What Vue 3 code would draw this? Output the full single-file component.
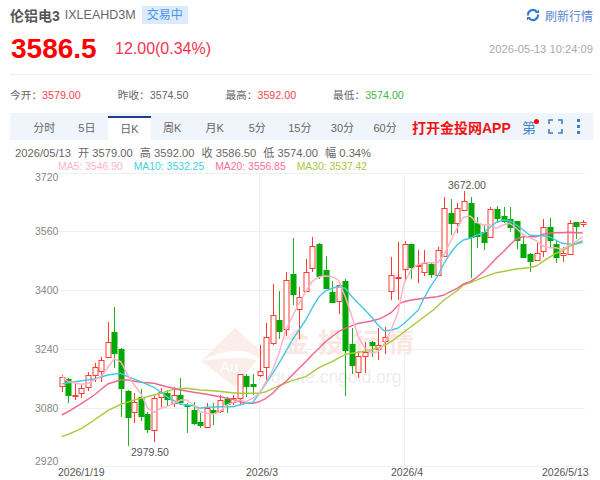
<script setup>
const tabs = ["分时", "5日", "日K", "周K", "月K", "5分", "15分", "30分", "60分"];
const stats = [
  { label: "今开", value: "3579.00", cls: "up" },
  { label: "昨收", value: "3574.50", cls: "" },
  { label: "最高", value: "3592.00", cls: "up" },
  { label: "最低", value: "3574.00", cls: "down" },
];
const legend = [
  { text: "MA5: 3546.90", color: "#ffb3cb" },
  { text: "MA10: 3532.25", color: "#3fcfe6" },
  { text: "MA20: 3556.85", color: "#f56f97" },
  { text: "MA30: 3537.42", color: "#a6c83f" },
];
const yLabels = [
  { text: "3720", y: 181 },
  { text: "3560", y: 235 },
  { text: "3400", y: 294 },
  { text: "3240", y: 353 },
  { text: "3080", y: 412 },
  { text: "2920", y: 465 },
];
const gridY = [173, 231, 290, 349, 408, 466];
const gridX = [259, 404];

// [wickTop, wickBottom, bodyTop, bodyBottom, up] read off three crops, each with its own origin
const partA = [
  [255, 305, 262, 287, 1], [263, 338, 268, 315, 0], [282, 330, 315, 317, 1], [285, 325, 295, 310, 1],
  [245, 302, 256, 290, 1], [220, 275, 230, 255, 1], [200, 275, 211, 242, 1], [97, 205, 156, 201, 1],
  [50, 235, 127, 190, 0], [175, 382, 177, 293, 0], [300, 467, 302, 381, 0], [308, 398, 336, 365, 1],
  [297, 392, 322, 378, 0], [365, 428, 372, 417, 0], [315, 456, 323, 420, 1], [295, 350, 305, 320, 1],
  [300, 348, 310, 327, 0], [292, 350, 316, 340, 1], [264, 345, 316, 337, 0], [340, 428, 345, 348, 0],
  [335, 405, 360, 398, 0], [370, 413, 396, 404, 0], [340, 413, 353, 411, 1], [340, 405, 359, 369, 0],
  [315, 370, 331, 362, 1], [320, 370, 328, 343, 0], [315, 345, 323, 335, 1],
];
const partB = [
  [462, 555, 463, 535, 1], [462, 530, 468, 497, 0], [463, 525, 493, 497, 0], [375, 470, 452, 466, 1],
  [308, 490, 350, 440, 1], [193, 375, 286, 370, 1], [212, 358, 300, 332, 0], [157, 348, 179, 328, 1],
  [55, 255, 162, 223, 0], [200, 358, 231, 268, 1], [118, 215, 157, 213, 1], [50, 155, 79, 145, 1],
  [70, 178, 73, 169, 0], [108, 205, 149, 203, 0], [183, 250, 216, 245, 0], [195, 282, 196, 244, 1],
  [178, 528, 183, 390, 0], [325, 462, 371, 435, 0], [392, 475, 408, 457, 1], [365, 458, 395, 408, 1],
  [362, 412, 366, 374, 0], [325, 420, 374, 387, 1], [320, 402, 350, 363, 1], [110, 240, 166, 212, 1],
  [65, 240, 172, 175, 1],
];
const partC = [
  [212, 335, 222, 298, 1], [222, 328, 223, 290, 0], [240, 340, 286, 288, 1], [240, 318, 280, 305, 1],
  [280, 325, 283, 311, 0], [232, 318, 241, 316, 1], [82, 260, 115, 258, 1], [88, 195, 129, 160, 0],
  [100, 190, 115, 160, 1], [62, 120, 94, 120, 1], [82, 325, 100, 202, 0], [140, 235, 160, 198, 0],
  [165, 240, 186, 217, 0], [112, 205, 116, 202, 1], [108, 160, 116, 145, 0], [110, 160, 139, 153, 0],
  [110, 185, 148, 170, 0], [152, 238, 153, 209, 0], [192, 262, 221, 262, 0], [250, 305, 252, 272, 0],
  [220, 272, 250, 271, 1], [148, 262, 172, 242, 1], [145, 235, 171, 209, 0], [210, 278, 221, 262, 0],
  [230, 275, 250, 256, 1], [150, 255, 160, 253, 1], [155, 208, 155, 167, 0], [150, 172, 157, 163, 1],
];

const toY = (list, origin) =>
  list.map(([wt, wb, bt, bb, up]) => [origin + wt / 3, origin + wb / 3, origin + bt / 3, origin + bb / 3, up]);

const candles = [...toY(partA, 290), ...toY(partB, 220), ...toY(partC, 170)].map((c, i) => {
  // snap the bodies to the pixel grid so the 1px outline stays crisp
  const top = Math.round(c[2]) + 0.5;
  const bottom = Math.round(c[3]) + 0.5;
  return {
    x: Math.round(61.7 + 6.595 * i) + 0.5,
    wickTop: Math.round(c[0]),
    wickBottom: Math.round(c[1]),
    bodyTop: top,
    bodyHeight: Math.max(bottom - top, 1),
    up: c[4] === 1,
  };
});

const pts = (list, ox, oy) => list.map(([x, y]) => `${(ox + x / 3).toFixed(1)},${(oy + y / 3).toFixed(1)}`).join(" ");
const line = (a, b, c) =>
  [pts(a, 40, 290), pts(b, 240, 220), pts(c, 400, 170)].join(" ");

const maLines = [
  {
    color: "#a9c83e",
    points: line(
      [[65,440],[85,433],[125,415],[163,390],[203,362],[242,343],[283,330],[342,315],[402,298],[440,295],[480,300],[520,302],[578,308],[598,310]],
      [[18,520],[58,520],[78,515],[117,497],[157,482],[197,470],[216,457],[237,443],[276,425],[316,403],[355,397],[394,390],[433,377],[453,365],[473,350],[493,335]],
      [[100,420],[132,390],[171,362],[190,345],[211,338],[250,322],[289,308],[349,297],[388,293],[409,288],[428,275],[448,262],[467,250],[487,243],[508,230],[527,220],[548,212]]
    ),
  },
  {
    color: "#f0668f",
    points: line(
      [[65,375],[85,365],[125,340],[163,315],[203,282],[242,270],[263,270],[302,277],[342,280],[380,290],[422,300],[461,307],[500,313],[540,320],[578,328],[598,335]],
      [[18,550],[38,550],[58,545],[78,535],[98,520],[117,500],[137,485],[157,465],[177,445],[197,425],[216,405],[237,385],[256,365],[276,350],[295,335],[316,325],[336,317],[355,310],[375,307],[394,303],[414,298],[433,290],[453,278]],
      [[0,400],[12,395],[33,390],[72,385],[112,380],[132,375],[151,365],[171,355],[190,342],[211,335],[230,322],[250,305],[270,285],[289,265],[310,245],[329,225],[349,207],[370,200],[388,200],[409,200],[428,193],[448,190],[467,188],[487,188],[508,187],[527,188],[548,189]]
    ),
  },
  {
    color: "#45c8e2",
    points: line(
      [[65,282],[85,278],[125,272],[163,267],[203,255],[242,250],[263,260],[302,275],[342,292],[380,320],[422,343],[461,347],[480,355],[500,352],[540,350],[578,350],[598,345]],
      [[18,550],[38,548],[58,520],[78,490],[98,460],[117,430],[137,395],[157,360],[177,330],[197,300],[216,265],[237,230],[256,213],[276,205],[295,200],[316,205],[336,230],[355,250],[375,270],[394,290],[414,315],[433,333],[453,330],[473,325],[493,310]],
      [[55,420],[72,385],[91,350],[112,320],[132,280],[151,250],[171,225],[190,210],[211,205],[230,195],[250,190],[270,172],[289,157],[310,150],[329,152],[349,165],[370,180],[388,195],[409,197],[428,197],[448,200],[467,210],[487,220],[508,222],[527,222],[548,217]]
    ),
  },
  {
    color: "#ffb0c6",
    points: line(
      [[65,258],[85,275],[125,283],[145,280],[163,270],[185,258],[203,232],[223,207],[242,215],[263,255],[283,285],[302,310],[323,355],[342,367],[362,355],[380,350],[402,340],[422,330],[440,330],[461,345],[480,365],[500,370],[520,372],[540,365],[560,345],[578,338],[598,330]],
      [[18,545],[38,535],[58,520],[78,485],[98,450],[117,400],[137,330],[157,290],[177,250],[197,215],[216,185],[237,170],[256,168],[276,170],[295,180],[316,230],[336,290],[355,350],[375,385],[394,398],[414,395],[433,370],[453,330],[473,280]],
      [[12,340],[33,300],[52,285],[72,278],[91,278],[112,278],[132,255],[151,215],[171,175],[190,142],[211,138],[230,158],[250,165],[270,165],[289,175],[310,165],[329,160],[349,175],[370,195],[388,203],[409,212],[428,228],[448,233],[467,233],[487,238],[508,225],[527,215],[548,200]]
    ),
  },
];
</script>

<template>
  <div class="page">
    <div class="title-row">
      <div class="title-left">
        <span class="name">伦铝电3</span>
        <span class="code">IXLEAHD3M</span>
        <span class="badge">交易中</span>
      </div>
      <div class="refresh">
        <svg width="14" height="14" viewBox="0 0 14 14">
          <path d="M2 7.5A5 5 0 0 1 11 4" fill="none" stroke="#2f78d8" stroke-width="2" />
          <path d="M12 6.5A5 5 0 0 1 3 10" fill="none" stroke="#2f78d8" stroke-width="2" />
          <path d="M9 5h4V1.5z" fill="#2f78d8" />
          <path d="M5 9H1v3.5z" fill="#2f78d8" />
        </svg>
        <span>刷新行情</span>
      </div>
    </div>

    <div class="price-row">
      <span class="price">3586.5</span>
      <span class="change">12.00(0.34%)</span>
      <span class="time">2026-05-13 10:24:09</span>
    </div>

    <div class="stats">
      <div v-for="s in stats" :key="s.label" class="stat">
        {{ s.label }}：<span :class="s.cls">{{ s.value }}</span>
      </div>
    </div>

    <div class="tabbar">
      <div class="tabs">
        <div v-for="t in tabs" :key="t" class="tab" :class="{ active: t === '日K' }">{{ t }}</div>
      </div>
      <span class="open-app">打开金投网APP</span>
      <span class="draw-tool">第<i class="dot"></i></span>
      <svg class="full" width="15" height="15" viewBox="0 0 15 15">
        <path d="M1 5V1h4M10 1h4v4M14 10v4h-4M5 14H1v-4" fill="none" stroke="#3f7fc4" stroke-width="1.6" />
      </svg>
      <div class="more"><i></i><i></i><i></i></div>
    </div>

    <div class="ohlc">
      <span>2026/05/13</span>
      <span>开 3579.00</span>
      <span>高 3592.00</span>
      <span>收 3586.50</span>
      <span>低 3574.00</span>
      <span>幅 0.34%</span>
    </div>
    <div class="legend">
      <span v-for="m in legend" :key="m.text" :style="{ color: m.color }">{{ m.text }}</span>
    </div>

    <svg class="chart" width="600" height="310" viewBox="0 170 600 310">
      <line v-for="y in gridY" :key="y" x1="58" x2="585" :y1="y + 0.5" :y2="y + 0.5" class="grid" />
      <line v-for="x in gridX" :key="x" :x1="x + 0.5" :x2="x + 0.5" y1="173" y2="466" class="grid" />

      <g class="watermark">
        <path d="M201 361L235 328L263 353L235 387z" fill="#fbeeea" />
        <path d="M201 361Q225 349 243 351Q255 353 263 362Q248 357 236 358Q218 358 201 361z" fill="#fff" />
        <text x="220" y="372" class="wm-au">Au</text>
        <text x="283" y="352" class="wm-cn">金投行情</text>
        <text x="271" y="383" class="wm-url">quote.cngold.org</text>
      </g>

      <text v-for="l in yLabels" :key="l.text" x="35" :y="l.y" class="axis">{{ l.text }}</text>

      <g v-for="(c, i) in candles" :key="i">
        <line :x1="c.x" :x2="c.x" :y1="c.wickTop" :y2="c.wickBottom" :stroke="c.up ? '#ff3b30' : '#1cb51c'" />
        <rect
          :x="c.x - 2.5"
          :y="c.bodyTop"
          width="5"
          :height="c.bodyHeight"
          :fill="c.up ? '#fff' : '#00a800'"
          :stroke="c.up ? '#ff3b30' : '#00a800'"
        />
      </g>

      <polyline
        v-for="m in maLines"
        :key="m.color"
        :points="m.points"
        :stroke="m.color"
        fill="none"
        stroke-width="1.4"
        stroke-linejoin="round"
      />

      <text x="448" y="189" class="note">3672.00</text>
      <text x="131" y="456" class="note">2979.50</text>

      <text x="58" y="476" class="date">2026/1/19</text>
      <text x="246" y="476" class="date">2026/3</text>
      <text x="391" y="476" class="date">2026/4</text>
      <text x="542" y="476" class="date">2026/5/13</text>
    </svg>
  </div>
</template>

<style scoped>
.page {
  width: 600px;
  height: 480px;
  overflow: hidden;
  padding: 0 7px 0 10px;
  box-sizing: border-box;
  background: #fff;
  font-family: "Liberation Sans", "Noto Sans CJK SC", sans-serif;
  color: #666;
}

.title-row {
  display: flex;
  align-items: center;
  justify-content: space-between;
  height: 18px;
  padding-top: 6px;
}

.title-left {
  display: flex;
  align-items: center;
}

.name {
  font-size: 14px;
  font-weight: bold;
  color: #555;
}

.code {
  margin-left: 5px;
  font-size: 12.5px;
  color: #666;
}

.badge {
  margin-left: 6px;
  padding: 0 5px;
  height: 18px;
  line-height: 18px;
  font-size: 12px;
  color: #4a94e8;
  background: #dcebfb;
}

.refresh {
  display: flex;
  align-items: center;
  gap: 5px;
  font-size: 12px;
  color: #5a86d6;
}

.price-row {
  display: flex;
  align-items: center;
  height: 50px;
  border-bottom: 1px solid #eee;
}

.price {
  width: 105px;
  margin-top: -1px;
  font-size: 28px;
  font-weight: bold;
  color: #f00;
  padding-left: 1px;
  box-sizing: border-box;
}

.change {
  font-size: 16px;
  color: #f5334f;
}

.time {
  margin-left: auto;
  font-size: 11.2px;
  color: #aaa;
}

.stats {
  display: flex;
  height: 38px;
  align-items: center;
  font-size: 10.7px;
  color: #666;
}

.stat {
  width: 107.7px;
}

.up {
  color: #f5454f;
}

.down {
  color: #46b34a;
}

.tabbar {
  display: flex;
  align-items: center;
  height: 27px;
  background: #f0f5fc;
}

.tabs {
  display: flex;
  width: 400px;
  height: 100%;
  padding: 3px 0 0 13px;
  box-sizing: border-box;
}

.tab {
  width: 42.6px;
  height: 24px;
  text-align: center;
  font-size: 11px;
  line-height: 24px;
  color: #666;
}

.tab.active {
  background: #fff;
  border-top: 2px solid #1f3d8a;
  line-height: 22px;
  box-sizing: border-box;
}

.open-app {
  width: 112px;
  padding-left: 2px;
  box-sizing: border-box;
  font-size: 14px;
  font-weight: bold;
  color: #f01414;
}

.draw-tool {
  position: relative;
  font-size: 14px;
  color: #4d86c6;
}

.dot {
  position: absolute;
  top: 2px;
  right: -3px;
  width: 5px;
  height: 5px;
  border-radius: 50%;
  background: #f00;
}

.full {
  margin-left: 12px;
}

.more {
  display: flex;
  flex-direction: column;
  gap: 3px;
  margin-left: 14px;
}

.more i {
  width: 3px;
  height: 3px;
  background: #3f7fc4;
}

.ohlc {
  display: flex;
  gap: 7px;
  padding: 7px 0 0 5px;
  height: 13px;
  line-height: 13px;
  font-size: 11.2px;
  color: #666;
}

.legend {
  display: flex;
  gap: 11px;
  height: 12px;
  padding-left: 48px;
  font-size: 10.4px;
  line-height: 13px;
}

.chart {
  display: block;
  margin: -2px 0 0 -10px;
}

.grid {
  stroke: #f0f0f0;
}

.axis {
  font-size: 10.5px;
  fill: #888;
}

.note {
  font-size: 10.5px;
  fill: #555;
}

.date {
  font-size: 10.5px;
  fill: #555;
}

.wm-au {
  font-size: 15px;
  fill: #fff;
}

.wm-cn {
  font-size: 26px;
  font-weight: bold;
  letter-spacing: 9px;
  fill: #f9e7e3;
}

.wm-url {
  font-size: 17.5px;
  fill: #eee;
}
</style>
